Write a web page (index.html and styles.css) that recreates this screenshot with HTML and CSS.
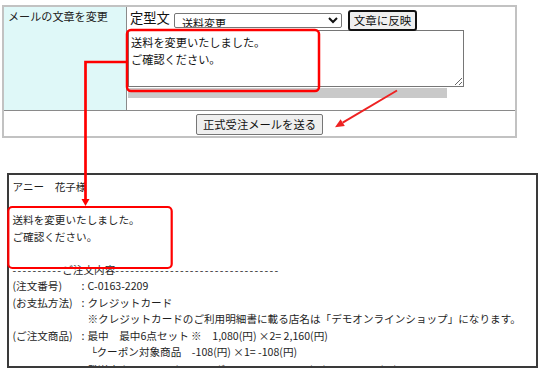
FILE: index.html
```html
<!DOCTYPE html>
<html lang="ja">
<head>
<meta charset="utf-8">
<title>メール文章変更</title>
<link rel="stylesheet" href="styles.css">
</head>
<body>
<div class="page">
  <div class="panel">
    <div class="row-main">
      <div class="label-cell">メールの文章を変更</div>
      <div class="edit-cell">
        <div class="tmpl-row">
          <span class="tmpl-label">定型文</span>
          <select class="tmpl-select"><option>送料変更</option></select>
          <button class="btn-apply" type="button">文章に反映</button>
        </div>
        <textarea class="msg">送料を変更いたしました。
ご確認ください。</textarea>
        <div class="scrollbar-strip"></div>
      </div>
    </div>
    <div class="row-submit">
      <button class="btn-send" type="button">正式受注メールを送る</button>
    </div>
  </div>

  <div class="mail">
    <div class="ln">アニー　花子様</div>
    <div class="ln">&nbsp;</div>
    <div class="ln">送料を変更いたしました。</div>
    <div class="ln">ご確認ください。</div>
    <div class="ln">&nbsp;</div>
    <div class="ln"><span class="dash">----------</span>ご注文内容<span class="dash">---------------------------------</span></div>
    <div class="ln"><span class="k">(注文番号)</span><span class="c">:</span>C-0163-2209</div>
    <div class="ln"><span class="k">(お支払方法)</span><span class="c">:</span>クレジットカード</div>
    <div class="ln ind">※クレジットカードのご利用明細書に載る店名は「デモオンラインショップ」になります。</div>
    <div class="ln"><span class="k">(ご注文商品)</span><span class="c">:</span>最中　最中6点セット ※　1,080(円) ×2= 2,160(円)</div>
    <div class="ln ind2"><span class="corner">└</span>クーポン対象商品　-108(円) ×1= -108(円)</div>
    <div class="ln ind">発送中カラフルマカロン　ヴァニーユ ※　300(円) ×2=　600(円)</div>
  </div>

  <svg class="notes" width="541" height="373" viewBox="0 0 541 373">
    <rect x="127" y="25" width="192" height="61" rx="4" ry="4" fill="none" stroke="#f00" stroke-width="2.5"/>
    <rect x="8.3" y="202" width="163.4" height="61" rx="4" ry="4" fill="none" stroke="#f00" stroke-width="2.2"/>
    <polyline points="127,57 85.5,57 85.5,195" fill="none" stroke="#f00" stroke-width="2.7"/>
    <polygon points="81.5,194 89.5,194 85.5,201" fill="#f00"/>
    <line x1="397" y1="85.5" x2="342.7" y2="117.7" stroke="#ee2222" stroke-width="2"/>
    <polygon points="335,122.3 344.8,121.1 340.6,114.2" fill="#ee2222"/>
  </svg>
</div>
</body>
</html>
```
FILE: styles.css
```css
html, body {
  margin: 0;
  padding: 0;
  background: #fff;
}
body {
  font-family: "Noto Sans CJK JP", "Noto Sans", sans-serif;
  color: #222;
  width: 541px;
  height: 373px;
  overflow: hidden;
}
.page {
  position: relative;
  width: 541px;
  height: 373px;
}
.panel {
  margin: 5px 0 0 2px;
  width: 515px;
  box-sizing: border-box;
  border: 2px solid #c2c2c2;
}
.row-main {
  display: grid;
  grid-template-columns: 123px 1fr;
  min-height: 103px;
  border-bottom: 1px solid #8a8a8a;
}
.label-cell {
  background: #dff8f8;
  border-right: 1px solid #8a8a8a;
  padding: 0.5px 4px;
  font-size: 11.1px;
  line-height: 17px;
  color: #222;
}
.edit-cell {
  padding: 3px 0 0 1px;
}
.tmpl-row {
  display: flex;
  align-items: flex-start;
  height: 20px;
}
.tmpl-label {
  font-size: 13.3px;
  line-height: 16px;
  margin-left: 2px;
  color: #111;
}
.tmpl-select {
  margin: 3px 0 0 4px;
  width: 168px;
  height: 15px;
  font-family: "Noto Sans CJK JP", sans-serif;
  font-size: 11px;
  padding: 0 0 0 3px;
  border: 1px solid #767676;
  border-radius: 2px;
  background: #fff;
  color: #111;
}
.btn-apply {
  margin-left: 6px;
  width: 69px;
  height: 21px;
  padding: 0;
  font-family: "Noto Sans CJK JP", sans-serif;
  font-size: 11.5px;
  line-height: 17px;
  color: #111;
  background: #efefef;
  border: 2px solid #111;
  border-radius: 3px;
}
.msg {
  display: block;
  width: 336px;
  height: 57px;
  box-sizing: border-box;
  margin: 0;
  padding: 3px 2px;
  border: 1px solid #767676;
  font-family: "Noto Sans CJK JP", sans-serif;
  font-size: 11.2px;
  line-height: 17px;
  color: #111;
  resize: both;
}
.scrollbar-strip {
  margin-top: 1px;
  width: 319px;
  height: 10px;
  background: #c9c9c9;
}
.row-submit {
  height: 25px;
  display: flex;
  justify-content: center;
  align-items: flex-start;
  padding-top: 3px;
  box-sizing: border-box;
}
.btn-send {
  width: 127px;
  height: 21px;
  padding: 0;
  font-family: "Noto Sans CJK JP", sans-serif;
  font-size: 11.3px;
  line-height: 17px;
  color: #111;
  background: #efefef;
  border: 1px solid #767676;
  border-radius: 2px;
}
.mail {
  margin: 35px 0 0 7px;
  width: 531px;
  height: 195px;
  box-sizing: border-box;
  border: 2px solid #3a3a3a;
  padding: 4px 0 0 3.5px;
  overflow: hidden;
  font-size: 10.6px;
  line-height: 16.5px;
  color: #1e1e1e;
}
.ln {
  white-space: nowrap;
}
.dash {
  letter-spacing: 1.3px;
}
.k {
  display: inline-block;
  width: 69px;
}
.c {
  display: inline-block;
  width: 6px;
}
.ind { padding-left: 75px; }
.ind2 { padding-left: 78px; }
.corner {
  font-family: "DejaVu Sans Mono", monospace;
  font-size: 10px;
}
.notes {
  position: absolute;
  left: 0;
  top: 0;
  pointer-events: none;
}
```
